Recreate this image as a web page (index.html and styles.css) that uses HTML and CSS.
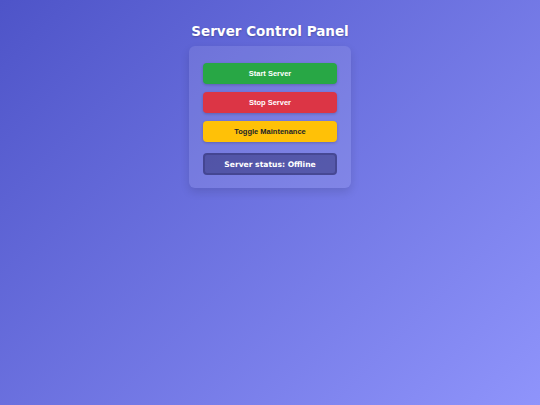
FILE: index.html
```html
<!DOCTYPE html>
<html>
<head>
<meta charset="utf-8">
<link rel="stylesheet" href="styles.css">
</head>
<body>
<div class="page">
  <h1 class="title">Server Control Panel</h1>
  <div class="card">
    <button class="btn btn-start">Start Server</button>
    <button class="btn btn-stop">Stop Server</button>
    <button class="btn btn-toggle">Toggle Maintenance</button>
    <div class="status">Server status: Offline</div>
  </div>
</div>
</body>
</html>
```
FILE: styles.css
```css
html, body {
  margin: 0;
  padding: 0;
}
body {
  width: 540px;
  height: 405px;
  background: linear-gradient(135deg, #4e54c8, #8f94fb);
  font-family: "DejaVu Sans", sans-serif;
  overflow: hidden;
}
.page {
  display: flex;
  flex-direction: column;
  align-items: center;
  padding-top: 22px;
}
.title {
  margin: 0 0 6px 0;
  color: #fff;
  font-size: 13.5px;
  font-weight: bold;
  line-height: 18px;
  text-shadow: 0 1px 2px rgba(0,0,0,0.25);
}
.card {
  width: 134px;
  padding: 17px 14px 13px 14px;
  background: rgba(255,255,255,0.1);
  border-radius: 6px;
  box-shadow: 0 4px 10px rgba(0,0,0,0.12);
  display: flex;
  flex-direction: column;
  gap: 8px;
}
.btn {
  display: block;
  width: 100%;
  height: 21px;
  border: none;
  border-radius: 4px;
  font-family: "Liberation Sans", Arial, sans-serif;
  font-weight: bold;
  font-size: 7.5px;
  color: #fff;
  box-shadow: 0 1px 3px rgba(0,0,0,0.2);
  padding: 0;
}
.btn-start { background: #28a745; }
.btn-stop { background: #dc3545; }
.btn-toggle { background: #ffc107; color: #212529; }
.status {
  margin-top: 3px;
  height: 18px;
  border: 2px solid rgba(50,50,120,0.45);
  border-radius: 4px;
  background: rgba(30,30,90,0.42);
  color: #fff;
  font-weight: bold;
  font-size: 7.6px;
  display: flex;
  align-items: center;
  justify-content: center;
}
```
